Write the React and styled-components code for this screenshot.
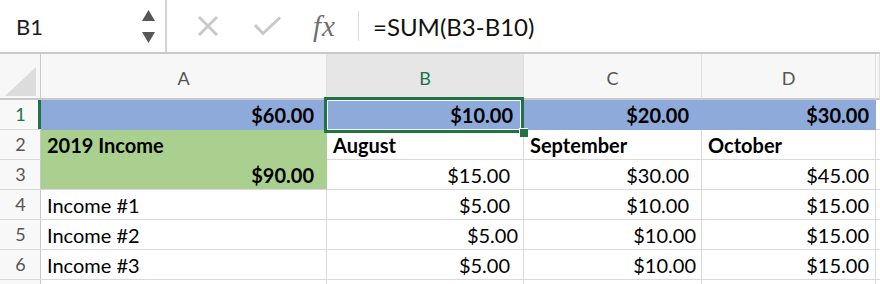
import React from "react";
import styled, { createGlobalStyle } from "styled-components";

const GREEN = "#217346";
const BLUE = "#8eaadb";
const LIME = "#a9d08e";
const GRID = "#d9d9d9";
const COLS = "41px 286px 197px 178px 174px 1fr";

const GlobalStyle = createGlobalStyle`
  html, body {
    margin: 0;
    padding: 0;
    background: #fff;
  }
  body {
    font-family: Lato, "Liberation Sans", sans-serif;
    overflow: hidden;
  }
`;

const Sheet = styled.div`
  width: 880px;
  height: 284px;
  overflow: hidden;
  background: #fff;
`;

const FormulaBar = styled.div`
  display: flex;
  align-items: stretch;
  height: 52px;
  border-bottom: 2px solid #c9c9c9;
`;

const NameBox = styled.div`
  display: flex;
  align-items: center;
  justify-content: space-between;
  box-sizing: border-box;
  width: 167px;
  padding: 0 10px 0 16px;
  border-right: 2px solid #d3d3d3;
  font-size: 22px;
  color: #1d1d1d;
`;

const Spinner = styled.div`
  display: flex;
  flex-direction: column;
  gap: 11px;
`;

const Actions = styled.div`
  display: flex;
  align-items: center;
  padding-left: 30px;
`;

const ActionIcon = styled.span`
  display: flex;
  margin-right: ${p => p.$gap}px;
`;

const Fx = styled.span`
  font-family: "Liberation Serif", "DejaVu Serif", serif;
  font-style: italic;
  font-size: 29px;
  color: #6f6f6f;
  width: 28px;
  margin-right: 17px;
  letter-spacing: 1px;
`;

const Divider = styled.span`
  width: 1px;
  height: 30px;
  background: #dddddd;
  margin-right: 14px;
`;

const Formula = styled.span`
  font-size: 24px;
  color: #111;
`;

const Row = styled.div`
  display: grid;
  grid-template-columns: ${COLS};
  height: ${p => p.$h}px;
`;

const Corner = styled.div`
  display: flex;
  align-items: flex-end;
  justify-content: flex-end;
  padding: 0 4px 2px 0;
  background: #f7f7f7;
  border-right: 1px solid #c8c8c8;
  border-bottom: 2px solid #c8c8c8;
`;

const ColHeader = styled.div`
  display: flex;
  align-items: center;
  justify-content: center;
  padding-top: 4px;
  background: ${p => (p.$active ? "#e6e6e6" : "#f7f7f7")};
  color: ${p => (p.$active ? GREEN : "#555")};
  border-right: 1px solid #dfdfdf;
  border-bottom: 2px solid ${p => (p.$active ? GREEN : "#c8c8c8")};
  font-size: 18px;
`;

const RowHeader = styled.div`
  display: flex;
  align-items: flex-end;
  justify-content: center;
  padding-bottom: 3px;
  line-height: 1.2;
  background: #f8f8f8;
  color: ${p => (p.$active ? GREEN : "#555")};
  border-bottom: 1px solid ${GRID};
  box-shadow: inset ${p => (p.$active ? "-3px 0 0 " + GREEN : "-1px 0 0 #c8c8c8")};
  font-size: 18px;
`;

const Cell = styled.div`
  position: relative;
  z-index: ${p => (p.$selected ? 2 : 0)};
  display: flex;
  align-items: flex-end;
  justify-content: ${p => (p.$right ? "flex-end" : "flex-start")};
  padding: 0 ${p => p.$pr ?? 6}px 2px 6px;
  line-height: 1.2;
  background: ${p => p.$fill || "#fff"};
  border-right: 1px solid ${p => p.$fill || GRID};
  border-bottom: 1px solid ${p => (p.$fillBottom ? p.$fill : GRID)};
  font-size: 20px;
  font-weight: ${p => (p.$bold ? 700 : 400)};
  color: #000;
  white-space: nowrap;
`;

const Selection = styled.div`
  position: absolute;
  top: -3px;
  left: -3px;
  right: -1px;
  bottom: -4px;
  border: 3px solid ${GREEN};
  box-shadow: inset 0 0 0 1px #fff;
  pointer-events: none;
`;

const FillHandle = styled.div`
  position: absolute;
  right: -7px;
  bottom: -7px;
  width: 8px;
  height: 8px;
  background: ${GREEN};
  border-top: 1px solid #fff;
  border-left: 1px solid #fff;
`;

const Up = () => (
  <svg width="13" height="11" viewBox="0 0 13 11">
    <polygon points="6.5,0 13,11 0,11" fill="#575757" />
  </svg>
);

const Down = () => (
  <svg width="13" height="11" viewBox="0 0 13 11">
    <polygon points="0,0 13,0 6.5,11" fill="#575757" />
  </svg>
);

const Cancel = () => (
  <svg width="22" height="22" viewBox="0 0 22 22">
    <path d="M2 2 L20 20 M20 2 L2 20" stroke="#c9c9c9" strokeWidth="3" />
  </svg>
);

const Confirm = () => (
  <svg width="29" height="20" viewBox="0 0 29 20">
    <path d="M2 9 L10 17.5 L27 1.5" stroke="#c9c9c9" strokeWidth="3" fill="none" />
  </svg>
);

const CornerMark = () => (
  <svg width="31" height="29" viewBox="0 0 31 29">
    <polygon points="31,0 31,29 0,29" fill="#dcdcdc" />
  </svg>
);

const rows = [
  {
    n: 1,
    active: true,
    cells: [
      { t: "$60.00", bold: true, right: true, pr: 12, fill: BLUE, fillBottom: true },
      { t: "$10.00", bold: true, right: true, pr: 10, fill: BLUE, fillBottom: true, selected: true },
      { t: "$20.00", bold: true, right: true, pr: 12, fill: BLUE, fillBottom: true },
      { t: "$30.00", bold: true, right: true, pr: 6, fill: BLUE, fillBottom: true },
    ],
  },
  {
    n: 2,
    cells: [
      { t: "2019 Income", bold: true, fill: LIME, fillBottom: true },
      { t: "August", bold: true },
      { t: "September", bold: true },
      { t: "October", bold: true },
    ],
  },
  {
    n: 3,
    cells: [
      { t: "$90.00", bold: true, right: true, pr: 12, fill: LIME },
      { t: "$15.00", right: true, pr: 13 },
      { t: "$30.00", right: true, pr: 12 },
      { t: "$45.00", right: true, pr: 6 },
    ],
  },
  {
    n: 4,
    cells: [
      { t: "Income #1" },
      { t: "$5.00", right: true, pr: 13 },
      { t: "$10.00", right: true, pr: 12 },
      { t: "$15.00", right: true, pr: 6 },
    ],
  },
  {
    n: 5,
    cells: [
      { t: "Income #2" },
      { t: "$5.00", right: true, pr: 5 },
      { t: "$10.00", right: true, pr: 5 },
      { t: "$15.00", right: true, pr: 6 },
    ],
  },
  {
    n: 6,
    cells: [
      { t: "Income #3" },
      { t: "$5.00", right: true, pr: 13 },
      { t: "$10.00", right: true, pr: 5 },
      { t: "$15.00", right: true, pr: 6 },
    ],
  },
  { n: 7, hideLabel: true, cells: [{}, {}, {}, {}] },
];

export default function App() {
  return (
    <Sheet>
      <GlobalStyle />
      <FormulaBar>
        <NameBox>
          B1
          <Spinner>
            <Up />
            <Down />
          </Spinner>
        </NameBox>
        <Actions>
          <ActionIcon $gap={34}>
            <Cancel />
          </ActionIcon>
          <ActionIcon $gap={31}>
            <Confirm />
          </ActionIcon>
          <Fx>fx</Fx>
          <Divider />
          <Formula>=SUM(B3-B10)</Formula>
        </Actions>
      </FormulaBar>

      <Row $h={46}>
        <Corner>
          <CornerMark />
        </Corner>
        {["A", "B", "C", "D", ""].map(l => (
          <ColHeader key={l || "E"} $active={l === "B"}>
            {l}
          </ColHeader>
        ))}
      </Row>

      {rows.map(r => (
        <Row key={r.n} $h={30}>
          <RowHeader $active={r.active}>{r.hideLabel ? null : r.n}</RowHeader>
          {r.cells.map((c, i) => (
            <Cell
              key={i}
              $bold={c.bold}
              $right={c.right}
              $pr={c.pr}
              $fill={c.fill}
              $fillBottom={c.fillBottom}
              $selected={c.selected}
            >
              {c.t}
              {c.selected && (
                <Selection>
                  <FillHandle />
                </Selection>
              )}
            </Cell>
          ))}
          <Cell />
        </Row>
      ))}
    </Sheet>
  );
}
